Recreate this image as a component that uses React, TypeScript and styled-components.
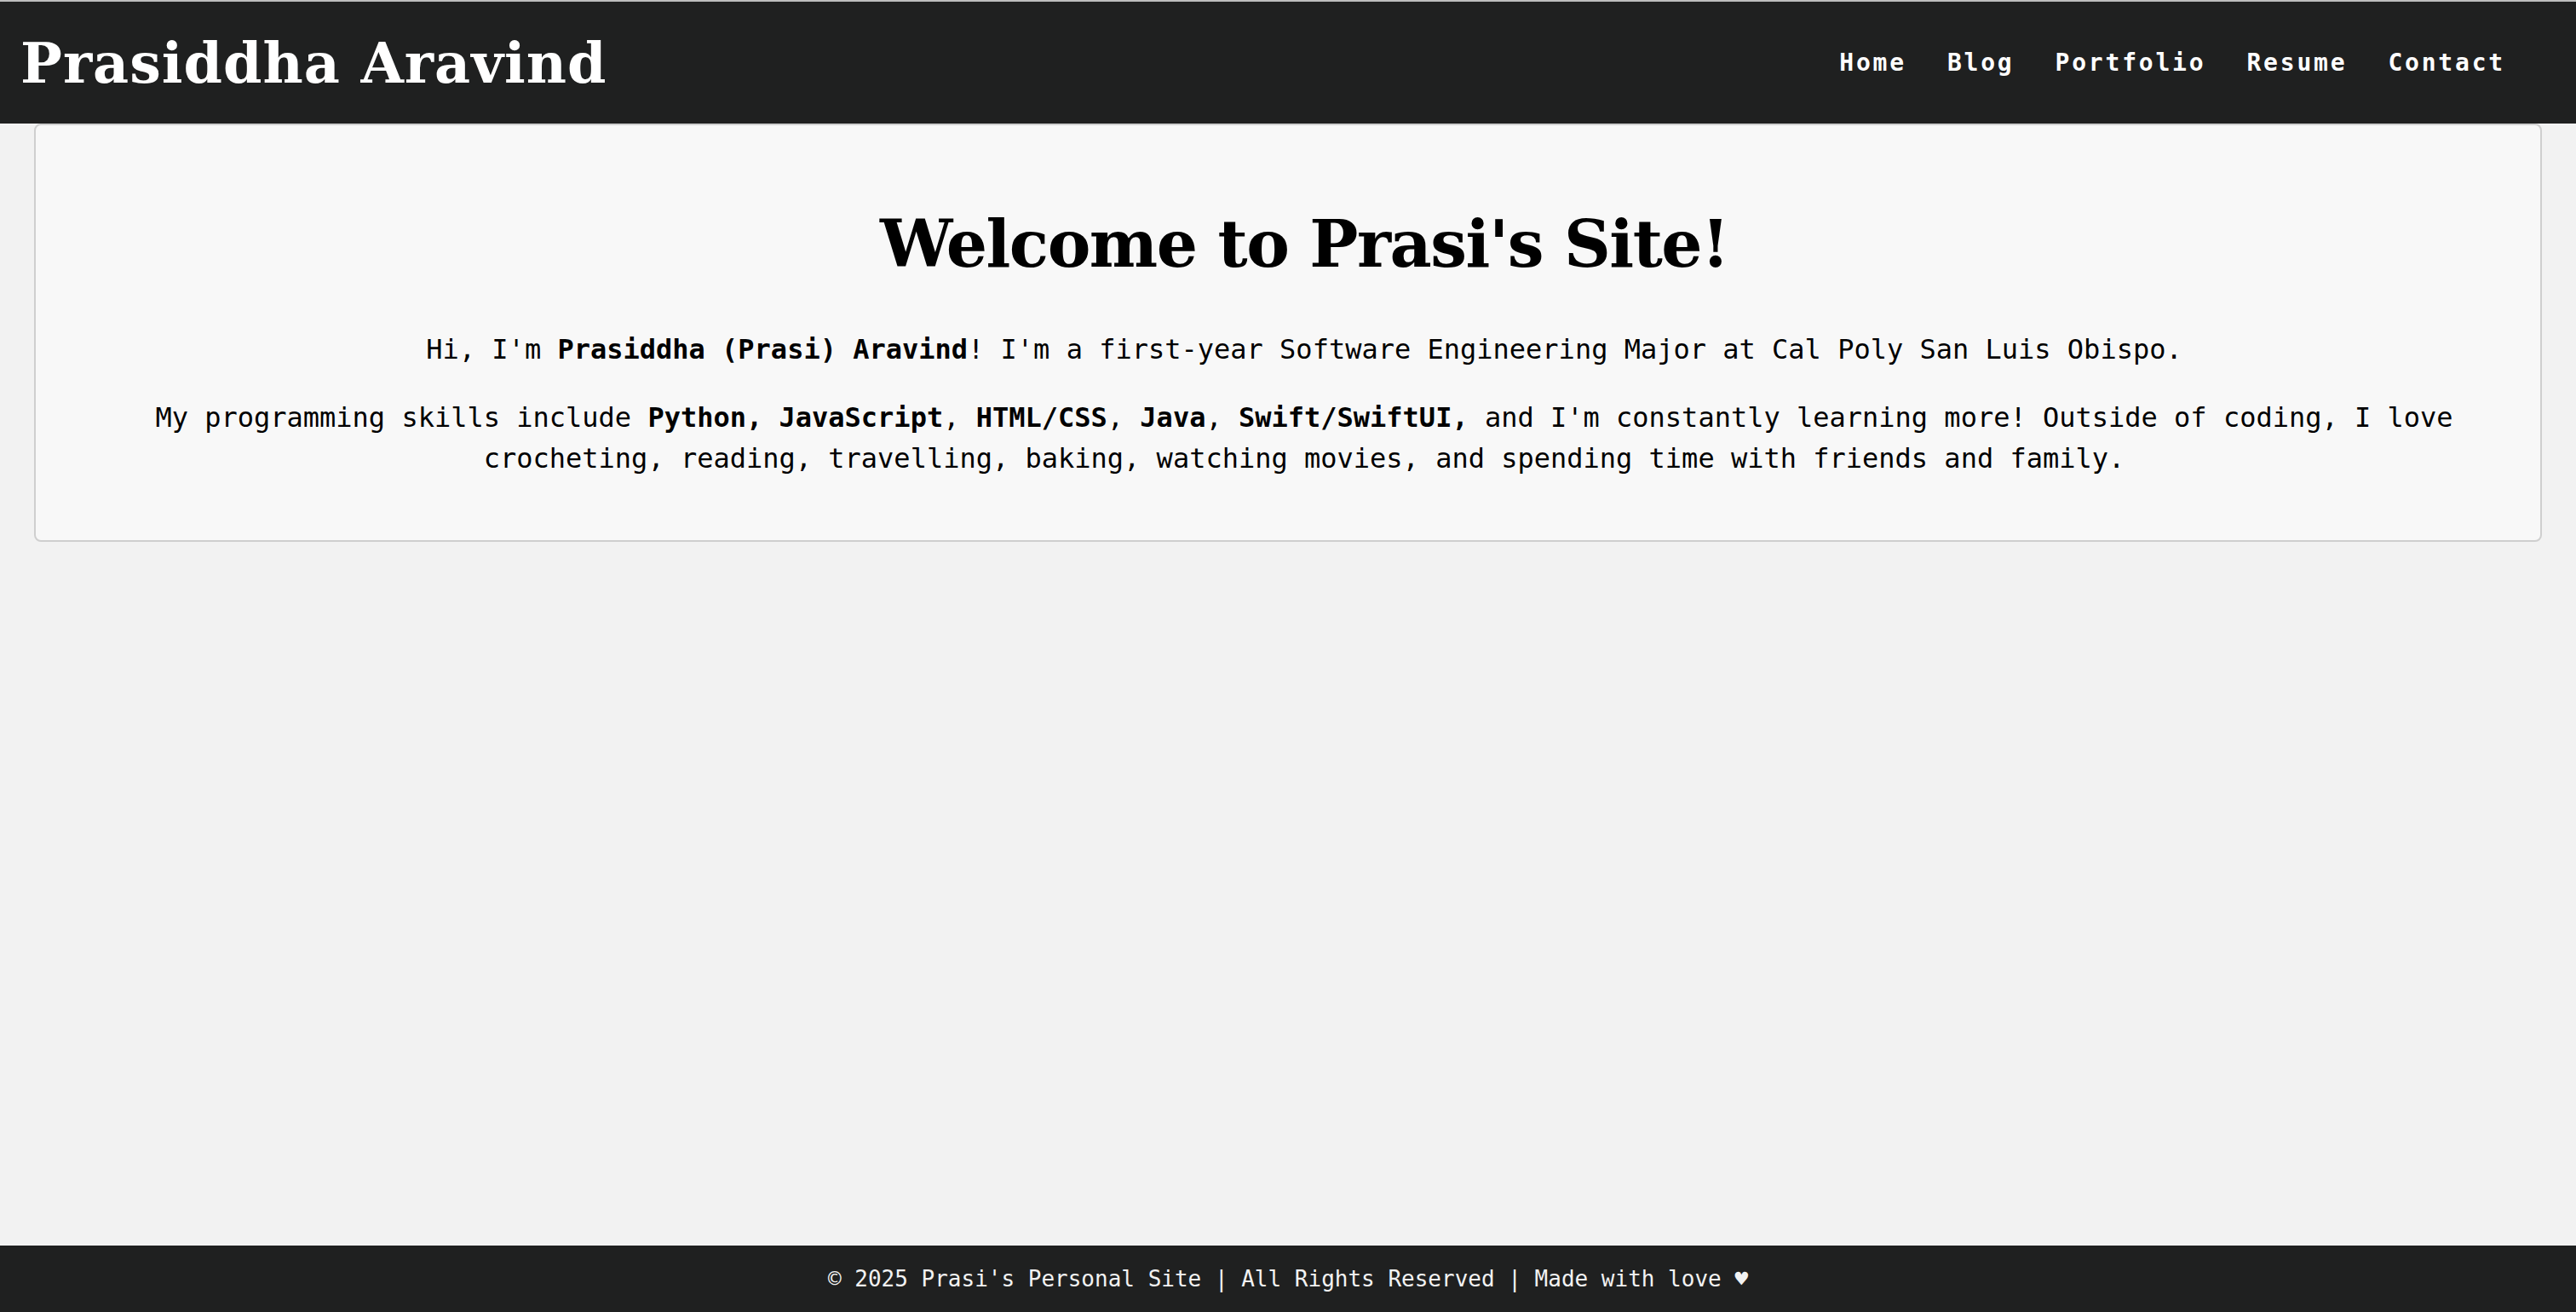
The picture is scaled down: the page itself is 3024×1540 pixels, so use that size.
import styled, { createGlobalStyle } from 'styled-components'

const GlobalStyle = createGlobalStyle`
  html, body {
    margin: 0;
    padding: 0;
  }
  body {
    background: #f2f2f2;
    font-family: 'DejaVu Sans Mono', Menlo, monospace;
    color: #000;
  }
`

const NAV_LINKS = ['Home', 'Blog', 'Portfolio', 'Resume', 'Contact']
const SKILLS = ['Python,', 'JavaScript', 'HTML/CSS', 'Java', 'Swift/SwiftUI,']

const St = {
  Page: styled.div`
    display: flex;
    flex-direction: column;
    min-height: 100vh;
  `,
  Header: styled.header`
    display: flex;
    justify-content: space-between;
    align-items: center;
    height: 145px;
    padding: 0 59px 0 24px;
    box-sizing: border-box;
    background: #1f2020;
    border-top: 2px solid #bdbdbd;
  `,
  Title: styled.h1`
    margin: 0;
    font-family: Georgia, 'DejaVu Serif', serif;
    font-size: 65px;
    font-weight: 700;
    letter-spacing: 1px;
    color: #fff;
  `,
  Nav: styled.nav`
    display: flex;
    align-items: center;
  `,
  NavLink: styled.a`
    padding: 8px 24px;
    font-family: 'DejaVu Sans Mono', monospace;
    font-size: 28px;
    font-weight: 700;
    letter-spacing: 2.8px;
    color: #fff;
    text-decoration: none;
    cursor: pointer;
  `,
  Main: styled.main`
    flex: 1;
  `,
  Card: styled.section`
    margin: 0 40px;
    padding: 40px 21px 40px 59px;
    background: #f8f8f8;
    border: 2px solid #cfcfcf;
    border-radius: 8px;
    text-align: center;
  `,
  Heading: styled.h2`
    margin: 54px 0;
    font-family: Georgia, 'DejaVu Serif', serif;
    font-size: 76px;
    line-height: 91px;
    font-weight: 700;
    letter-spacing: -1.5px;
  `,
  Text: styled.p`
    margin: 32px 0;
    font-size: 32px;
    line-height: 48px;
  `,
  Footer: styled.footer`
    display: flex;
    align-items: center;
    justify-content: center;
    height: 78px;
    background: #1f2020;
    color: #f2f2f2;
    font-size: 26px;
  `,
}

const App = () => {
  return (
    <>
      <GlobalStyle />
      <St.Page>
        <St.Header>
          <St.Title>Prasiddha Aravind</St.Title>
          <St.Nav>
            {NAV_LINKS.map((link) => (
              <St.NavLink key={link}>{link}</St.NavLink>
            ))}
          </St.Nav>
        </St.Header>
        <St.Main>
          <St.Card>
            <St.Heading>Welcome to Prasi's Site!</St.Heading>
            <St.Text>
              Hi, I'm <b>Prasiddha (Prasi) Aravind</b>! I'm a first-year Software Engineering Major at
              Cal Poly San Luis Obispo.
            </St.Text>
            <St.Text>
              My programming skills include{' '}
              {SKILLS.map((skill) => (
                <span key={skill}>
                  <b>{skill}</b>
                  {skill.endsWith(',') ? '' : ','}{' '}
                </span>
              ))}
              and I'm constantly learning more! Outside of coding, I love crocheting, reading,
              travelling, baking, watching movies, and spending time with friends and family.
            </St.Text>
          </St.Card>
        </St.Main>
        <St.Footer>© 2025 Prasi's Personal Site | All Rights Reserved | Made with love ♥</St.Footer>
      </St.Page>
    </>
  )
}

export default App
